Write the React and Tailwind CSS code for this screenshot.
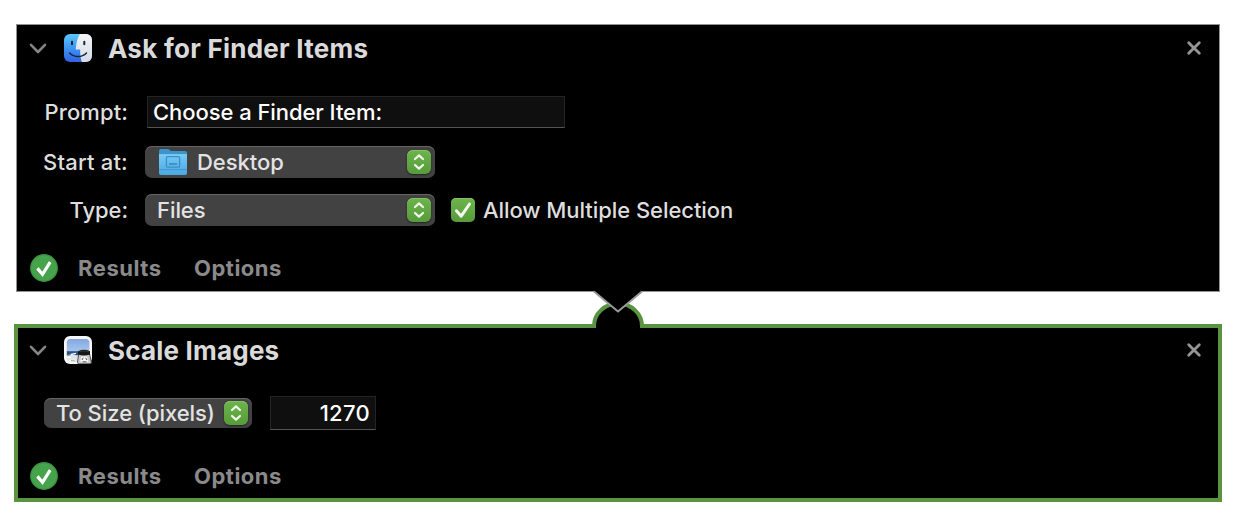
import React from "react";

function Chevron() {
  return (
    <svg className="h-4 w-5 shrink-0" viewBox="0 0 20 16" fill="none">
      <path d="M3 4.8 L10 12 L17 4.8" stroke="#858585" strokeWidth="2.6" strokeLinecap="round" strokeLinejoin="round" />
    </svg>
  );
}

function Close() {
  return (
    <svg className="h-4 w-4 shrink-0" viewBox="0 0 16 16" fill="none">
      <path d="M2.7 2.7 L13.3 13.3 M13.3 2.7 L2.7 13.3" stroke="#969696" strokeWidth="2.8" strokeLinecap="round" />
    </svg>
  );
}

function FinderIcon() {
  return (
    <svg className="h-7 w-7 shrink-0" viewBox="0 0 28 28" fill="none">
      <defs>
        <linearGradient id="finderBlue" x1="0" y1="0" x2="0" y2="1">
          <stop offset="0" stopColor="#5cc8f8" />
          <stop offset="0.5" stopColor="#3f94f3" />
          <stop offset="1" stopColor="#2f62e4" />
        </linearGradient>
        <linearGradient id="finderWhite" x1="0" y1="0" x2="0" y2="1">
          <stop offset="0" stopColor="#f4f5f7" />
          <stop offset="1" stopColor="#d3dbe6" />
        </linearGradient>
        <clipPath id="finderClip"><rect width="28" height="28" rx="6" /></clipPath>
      </defs>
      <g clipPath="url(#finderClip)">
        <rect width="28" height="28" fill="url(#finderBlue)" />
        <path d="M15.8 0 C13.5 4 12.2 9 11.7 15.6 H16.2 C16 20 16.5 24.5 17.8 28 H28 V0 Z" fill="url(#finderWhite)" />
      </g>
      <path d="M8 7.8 V10.2 M20.3 7.8 V10.2" stroke="#16243c" strokeWidth="2" strokeLinecap="round" />
      <path d="M5.6 19 C10.5 23.8 17.8 23.8 22.5 19" stroke="#16243c" strokeWidth="1.5" strokeLinecap="round" />
    </svg>
  );
}

function PreviewIcon() {
  return (
    <svg className="h-7 w-7 shrink-0" viewBox="0 0 28 28" fill="none">
      <defs>
        <linearGradient id="sky" x1="0" y1="0" x2="0" y2="1">
          <stop offset="0" stopColor="#7fa6e2" />
          <stop offset="1" stopColor="#a9c5ee" />
        </linearGradient>
        <clipPath id="photoClip"><rect x="2.8" y="3" width="22.6" height="22.4" rx="3.5" /></clipPath>
      </defs>
      <rect width="28" height="28" rx="6" fill="#f7f7f7" />
      <g clipPath="url(#photoClip)">
        <rect x="2" y="2" width="24" height="14" fill="url(#sky)" />
        <rect x="2" y="15.2" width="24" height="4.4" fill="#2e5388" />
        <path d="M2 19.2 L8 18.2 L15 20 V26 H2 Z" fill="#dce4ec" />
        <path d="M7 18.4 L12 17.4 M3 20.8 L7 21.6 M5 24.4 H11" stroke="#fff" strokeWidth="1.3" />
        <path d="M3 19.8 L6 19.2 M7 24.5 L11 25" stroke="#98866e" strokeWidth="0.8" />
      </g>
      <path d="M14.7 18 L13.5 26.2 Q13.5 27.8 15 27.8 H25.7 Q27.4 27.8 27.3 26.2 L25.6 18 Z" fill="#c9caca" stroke="#555" strokeWidth="1" />
      <path d="M17.3 20.5 H23.1 L24.3 25.8 H16.2 Z" fill="#f7f7f7" />
      <path d="M18 24 L19.2 21.8 M21.7 21.8 L22.9 24 M18.6 25.8 H22.4" stroke="#4b4b4b" strokeWidth="0.9" />
      <path d="M14 15.2 Q20 12.4 26 15.2 V18.4 Q20 20.4 14 18.4 Z" fill="#171717" />
      <path d="M15.2 15.6 Q20 14.2 24.8 15.6" stroke="#444" strokeWidth="0.7" />
    </svg>
  );
}

function FolderIcon() {
  return (
    <svg className="h-7 w-[30px] shrink-0" viewBox="0 0 30 28" fill="none">
      <defs>
        <linearGradient id="folderFront" x1="0" y1="0" x2="0" y2="1">
          <stop offset="0" stopColor="#75c9f7" />
          <stop offset="1" stopColor="#4ba8e2" />
        </linearGradient>
      </defs>
      <path d="M1 3 Q1 1 3 1 H9.5 Q10.8 1 12 2.2 L13 3 H27 Q29 3 29 5 V12 H1 Z" fill="#3d94cd" />
      <path d="M1 6.6 H29 V25 Q29 27 27 27 H3 Q1 27 1 25 Z" fill="url(#folderFront)" />
      <path d="M1 6.8 H29" stroke="#8fd6fb" strokeWidth="0.8" />
      <path d="M1 21.7 H29" stroke="#378dc5" strokeWidth="0.8" />
      <rect x="8.4" y="8.7" width="13.2" height="10.4" rx="1" stroke="#3c8fc5" strokeWidth="1.3" />
      <path d="M11 16 H19.2" stroke="#3c8fc5" strokeWidth="1.8" />
    </svg>
  );
}

function Stepper() {
  return (
    <span className="flex h-6 w-6 shrink-0 items-center justify-center rounded-[6px] bg-linear-to-b from-[#6cb44b] to-[#589b3a] shadow-[inset_0_1px_0_#82c365,0_1px_2px_#222]">
      <svg className="h-6 w-6" viewBox="0 0 24 24" fill="none">
        <path d="M8 9 L12 5.4 L16 9 M8 15 L12 18.6 L16 15" stroke="#eef6ea" strokeWidth="2.2" strokeLinecap="round" strokeLinejoin="round" />
      </svg>
    </span>
  );
}

function Popup({ className, children }) {
  return (
    <div className={`flex shrink-0 items-center rounded-[7px] bg-[#424242] pr-1 text-[#e3e3e3] shadow-[inset_0_1px_0_#656565] ${className}`}>
      {children}
      <span className="grow" />
      <Stepper />
    </div>
  );
}

function Header({ icon, title, className }) {
  return (
    <div className={`flex items-center ${className}`}>
      <Chevron />
      <span className="ml-4 flex">{icon}</span>
      <h2 className="ml-4 grow pt-[2px] text-[26px] leading-8 font-bold text-[#dadada]">{title}</h2>
      <Close />
    </div>
  );
}

function Footer() {
  return (
    <div className="flex h-7 items-center text-[22px] font-bold text-[#8a8a8a]">
      <svg className="h-7 w-7 shrink-0" viewBox="0 0 28 28" fill="none">
        <circle cx="14" cy="14" r="13.4" fill="#47a34b" stroke="#398b3e" strokeWidth="1.1" />
        <path d="M7.4 14.4 L12.5 20.4 L20.2 8.2" stroke="#fff" strokeWidth="3.2" />
      </svg>
      <span className="ml-5 w-[116px] tracking-[0.55px]">Results</span>
      <span className="tracking-[0.5px]">Options</span>
    </div>
  );
}

function Connector() {
  return (
    <svg className="absolute top-[288px] left-[586px] h-[44px] w-[64px]" viewBox="586 288 64 44" fill="none">
      <path d="M594 329 V326 A24 23 0 0 1 642 326 V329 Z" fill="#000" />
      <path d="M594 328 V326 A24 22.5 0 0 1 642 326 V328" stroke="#5a9441" strokeWidth="4" />
      <path d="M594 288 V291.5 L618 311.8 L642 291.5 V288 Z" fill="#000" />
      <path d="M594 291.5 L618 311.5 L642 291.5" stroke="#999" strokeWidth="2" />
    </svg>
  );
}

export default function App() {
  return (
    <main className="relative h-[524px] w-[1236px] bg-white pt-6 font-['Inter','Liberation_Sans',sans-serif] text-[22px] leading-7 font-[450] tracking-[-0.06px] text-[#dedede]">
      <section className="ml-4 h-[268px] w-[1204px] border border-[#929292] bg-black">
        <Header icon={<FinderIcon />} title={<span className="tracking-[0.25px]">Ask for Finder Items</span>} className="h-[46px] pr-[17px] pl-[11px]" />
        <div className="mt-[25px] flex h-8 items-center">
          <span className="w-[111px] text-right tracking-[0.1px]">Prompt:</span>
          <div className="ml-[19px] flex h-8 w-[418px] items-center border border-[#242424] border-b-[#555] bg-[#0f0f0f] pl-[5px] font-medium tracking-[-0.06px] text-white">Choose a Finder Item:</div>
        </div>
        <div className="mt-[18px] flex h-8 items-center">
          <span className="w-[111px] text-right tracking-[0.2px]">Start at:</span>
          <Popup className="ml-[17px] h-8 w-[290px] pl-[13px]">
            <FolderIcon />
            <span className="ml-[9px]">Desktop</span>
          </Popup>
        </div>
        <div className="mt-4 flex h-8 items-center">
          <span className="w-[111px] text-right">Type:</span>
          <Popup className="ml-[17px] h-8 w-[290px] pl-3"><span>Files</span></Popup>
          <span className="ml-4 flex h-6 w-6 rounded-[5px] bg-linear-to-b from-[#6cb44b] to-[#589b3a] shadow-[inset_0_1px_0_#82c365]">
            <svg className="h-6 w-6" viewBox="0 0 24 24" fill="none">
              <path d="M5.4 12.8 L10.2 18.2 L18.5 6" stroke="#f3f8f0" strokeWidth="3" strokeLinecap="round" strokeLinejoin="round" />
            </svg>
          </span>
          <span className="ml-2">Allow Multiple Selection</span>
        </div>
        <div className="mt-7 pl-[13px]"><Footer /></div>
      </section>

      <section className="mt-8 ml-[14px] h-[178px] w-[1208px] border-4 border-[#5a9441] bg-black">
        <Header icon={<PreviewIcon />} title={<span className="tracking-[0.2px]">Scale Images</span>} className="h-[44px] pr-4 pl-[10px]" />
        <div className="mt-6 flex h-[34px] items-center pl-[26px]">
          <Popup className="h-[30px] w-[208px] pl-3"><span>To Size (pixels)</span></Popup>
          <div className="ml-[18px] flex h-[34px] w-[106px] items-center justify-end border border-[#242424] border-b-[#555] bg-[#0f0f0f] pr-[5px] font-medium tracking-[0.3px] text-white">1270</div>
        </div>
        <div className="mt-8 pl-3"><Footer /></div>
      </section>
      <Connector />
    </main>
  );
}
